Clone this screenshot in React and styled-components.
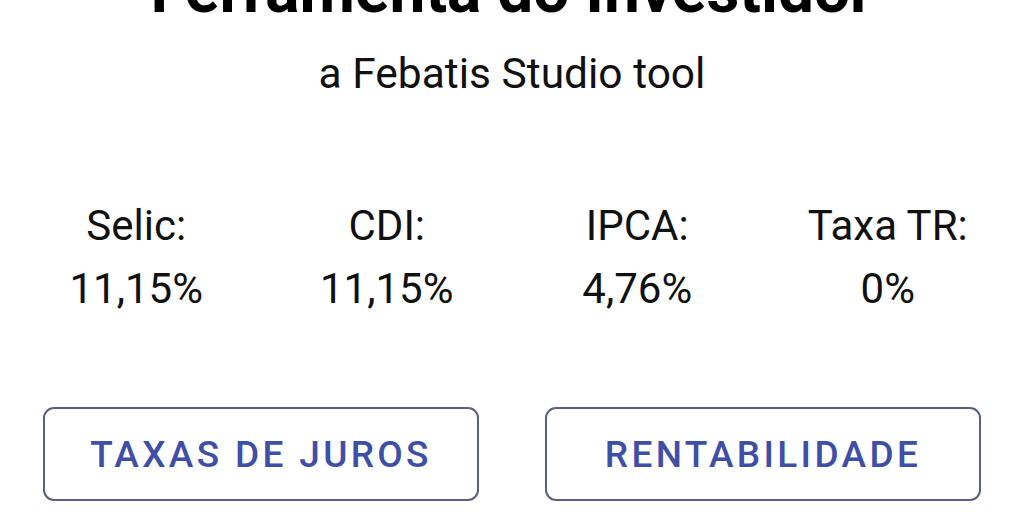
import React from 'react';
import styled, { createGlobalStyle } from 'styled-components';

const GlobalStyle = createGlobalStyle`
    html, body {
        margin: 0;
        padding: 0;
        background: #ffffff;
        overflow: hidden;
    }
    body {
        font-family: Roboto, "Noto Sans", "Liberation Sans", sans-serif;
        color: #000000;
    }
`;

const Page = styled.div`
    width: 1024px;
    height: 518px;
    overflow: hidden;
    display: flex;
    flex-direction: column;
    align-items: stretch;
`;

const Title = styled.h1`
    margin: -41px 0 0;
    font-size: 64px;
    line-height: 64px;
    font-weight: 700;
    text-align: center;
    color: #000;
`;

const Subtitle = styled.div`
    margin-top: 27px;
    font-size: 42.5px;
    line-height: 48px;
    text-align: center;
    color: #111;
`;

const Rates = styled.div`
    margin-top: 96px;
    padding: 0 11px;
    display: grid;
    grid-template-columns: repeat(4, 1fr);
`;

const Rate = styled.div`
    display: flex;
    flex-direction: column;
    align-items: center;
    font-size: 42px;
    line-height: 63px;
    color: #111;
`;

const Actions = styled.div`
    margin-top: 87px;
    padding: 0 43px;
    display: grid;
    grid-template-columns: 1fr 1fr;
    gap: 66px;
`;

const OutlineButton = styled.button`
    height: 94px;
    border: 2px solid #5a5f80;
    border-radius: 11px;
    background: #ffffff;
    color: #3f4fa6;
    font-family: Roboto, "Noto Sans", sans-serif;
    font-weight: 500;
    font-size: 37px;
    letter-spacing: 0.09em;
    text-transform: uppercase;
    cursor: pointer;
    padding: 0;
`;

const rates = [
    { label: 'Selic:', value: '11,15%' },
    { label: 'CDI:', value: '11,15%' },
    { label: 'IPCA:', value: '4,76%' },
    { label: 'Taxa TR:', value: '0%' },
];

const App = () => {
    return (
        <Page>
            <GlobalStyle />
            <Title>Ferramenta do Investidor</Title>
            <Subtitle>a Febatis Studio tool</Subtitle>
            <Rates>
                {rates.map((r) => (
                    <Rate key={r.label}>
                        <span>{r.label}</span>
                        <span>{r.value}</span>
                    </Rate>
                ))}
            </Rates>
            <Actions>
                <OutlineButton>Taxas de juros</OutlineButton>
                <OutlineButton>Rentabilidade</OutlineButton>
            </Actions>
        </Page>
    );
};

export default App;
